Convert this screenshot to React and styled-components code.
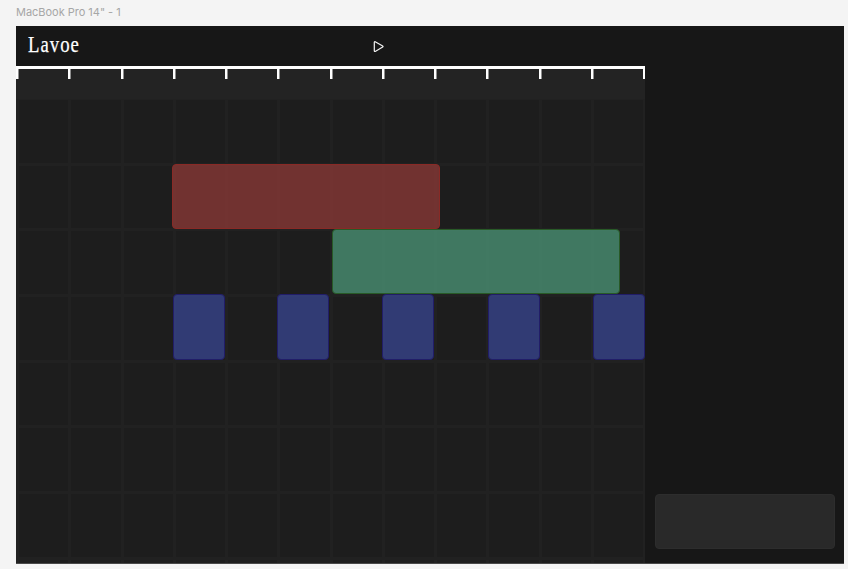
import React from "react";
import styled, { createGlobalStyle } from "styled-components";

const COLUMN = 52.25;
const ROW = 65.7;

const GlobalStyle = createGlobalStyle`
  * { box-sizing: border-box; }
  body { margin: 0; background: #f4f4f4; overflow: hidden; }
`;

const Canvas = styled.div`
  width: 848px;
  height: 569px;
  padding-left: 16px;
  display: flex;
  flex-direction: column;
  background: #f4f4f4;
`;

const FrameLabel = styled.div`
  height: 26px;
  font: 400 11px/25px Inter, sans-serif;
  letter-spacing: -0.02px;
  color: #a6a6a6;
  white-space: nowrap;
`;

const Frame = styled.main`
  width: 828px;
  height: 538px;
  display: flex;
  background: #171717;
  border-bottom: 1px solid #494949;
  overflow: hidden;
`;

const Editor = styled.section`
  width: 629px;
  flex: none;
  display: flex;
  flex-direction: column;
`;

const Header = styled.header`
  height: 40px;
  flex: none;
  display: flex;
  align-items: center;
  padding-left: 12px;
`;

const Brand = styled.h1`
  margin: 0;
  width: 345px;
  height: 40px;
  font: 400 24px/37px "Liberation Serif", serif;
  letter-spacing: 1.3px;
  color: #fff;
  -webkit-text-stroke: 0.25px #fff;
  transform: scaleX(0.78);
  transform-origin: left center;
`;

const PlayButton = styled.button`
  display: flex;
  width: 12px;
  height: 14px;
  padding: 0;
  border: 0;
  background: none;
`;

const Ruler = styled.div`
  height: 33px;
  flex: none;
  display: flex;
  border-top: 3px solid #fff;
  background: #232323;
  overflow: hidden;
`;

const Tick = styled.span`
  width: ${COLUMN}px;
  height: 10px;
  flex: none;
  background: linear-gradient(90deg, #fff 2px, #8f8f8f 2px) 0 0 / 3px 10px no-repeat;
  &:last-child { width: 3px; }
`;

const Tracks = styled.div`
  position: relative;
  flex: 1;
  background-color: #1d1d1d;
  background-image:
    repeating-linear-gradient(90deg, #212121 0 3px, transparent 3px ${COLUMN}px),
    repeating-linear-gradient(180deg, #212121 0 3px, transparent 3px ${ROW}px);
  background-position: 0 0, 0 -2px;
  background-size: 100% 100%, 100% 500px;
`;

const palette = {
  red: ["rgba(158,62,59,.65)", "#892a26"],
  green: ["rgba(83,169,133,.65)", "#285a27"],
  blue: ["rgba(59,73,158,.68)", "#211d68"],
};

const Clip = styled.div`
  position: absolute;
  left: ${(p) => p.$start}px;
  top: ${(p) => p.$top}px;
  width: ${(p) => p.$length}px;
  height: ${(p) => p.$height}px;
  border: 1px solid ${(p) => palette[p.$tone][1]};
  border-radius: 4px;
  background: ${(p) => palette[p.$tone][0]};
`;

const Sidebar = styled.aside`
  flex: 1;
  display: flex;
  align-items: flex-end;
  padding: 0 9px 14px 10px;
`;

const Panel = styled.div`
  width: 180px;
  height: 55px;
  border: 1px solid #2d2d2d;
  border-radius: 4px;
  background: #292929;
`;

const clips = [
  { tone: "red", start: 156, top: 65, length: 268, height: 65 },
  { tone: "green", start: 316, top: 130, length: 288, height: 65 },
  ...[157, 261, 366, 472, 577].map((start) => ({
    tone: "blue", start, top: 195, length: 52, height: 66,
  })),
];

export default function App() {
  return (
    <>
      <GlobalStyle />
      <Canvas>
        <FrameLabel>MacBook Pro 14" - 1</FrameLabel>
        <Frame>
          <Editor>
            <Header>
              <Brand>Lavoe</Brand>
              <PlayButton aria-label="Play">
                <svg width="12" height="14" viewBox="0 0 12 14" fill="none">
                  <path d="M1.3 3.3c0-.5.5-.8.9-.6l7.5 4.3c.5.3.5.8 0 1.1l-7.5 4.3c-.4.2-.9 0-.9-.6Z" stroke="#f3f3f3" strokeWidth="1.2" />
                </svg>
              </PlayButton>
            </Header>
            <Ruler>
              {Array.from({ length: 13 }, (_, i) => <Tick key={i} />)}
            </Ruler>
            <Tracks>
              {clips.map((c) => (
                <Clip key={c.start} $tone={c.tone} $start={c.start} $top={c.top} $length={c.length} $height={c.height} />
              ))}
            </Tracks>
          </Editor>
          <Sidebar><Panel /></Sidebar>
        </Frame>
      </Canvas>
    </>
  );
}
